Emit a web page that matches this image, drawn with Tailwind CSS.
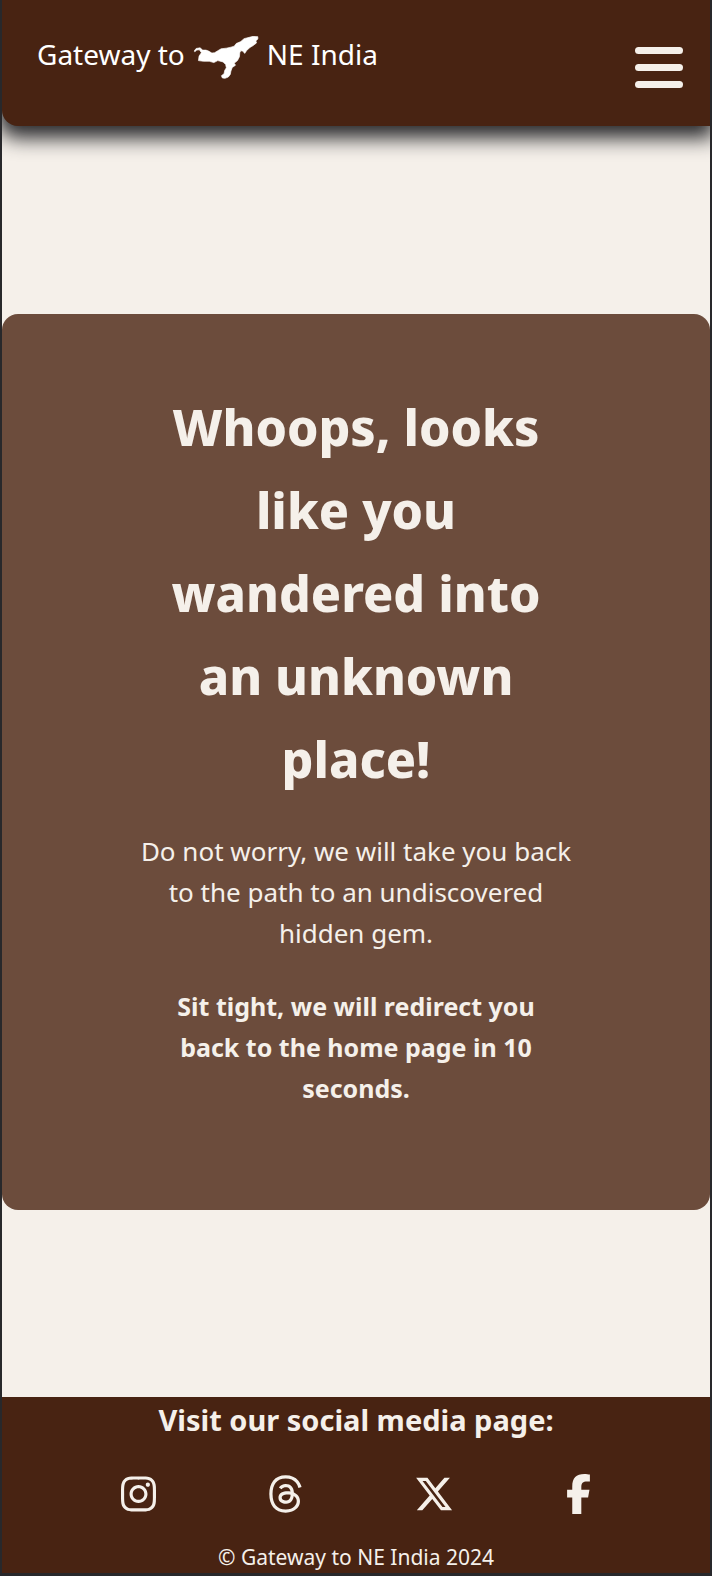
<!DOCTYPE html>
<html lang="en">
<head>
<meta charset="utf-8">
<meta name="viewport" content="width=device-width, initial-scale=1">
<title>Gateway to NE India</title>
<script src="https://cdn.jsdelivr.net/npm/@tailwindcss/browser@4"></script>
</head>
<body class="flex min-h-screen flex-col border-x-2 border-b-3 border-[#28282b] bg-[#f5f0ea] font-['Noto_Sans',sans-serif] text-[#f5f0ea]">
  <header class="flex items-start justify-between rounded-bl-2xl bg-[#482312] pt-9 pr-4 pb-[27px] pl-[35px] shadow-[0_8px_20px_4px_#28282b]">
    <a href="#" class="flex items-start gap-2 text-[28px] leading-[37px] text-white">
      <span>Gateway to</span>
      <svg class="h-[43px] w-[66px]" viewBox="9 9 200 131" fill="currentColor" stroke="currentColor" stroke-width="2" stroke-linejoin="round" aria-hidden="true"><path d="M12 55 L18 47 L30 45 L38 52 L48 52 L56 55 L66 61 L74 60 L84 54 L94 48 L110 46 L124 43 L134 40 L140 32 L154 26 L164 17 L180 13 L192 10 L206 11 L206 18 L200 24 L202 30 L192 38 L182 44 L172 53 L166 62 L160 55 L154 54 L151 60 L150 72 L144 84 L134 92 L138 98 L128 105 L124 116 L122 126 L116 134 L106 138 L98 137 L95 130 L103 124 L105 114 L110 106 L108 96 L100 88 L84 84 L72 90 L58 86 L40 86 L25 84 L27 70 L34 60 L28 51 L20 52 L14 57Z"/></svg>
      <span>NE India</span>
    </a>
    <button type="button" aria-label="Open menu" class="p-[11px]">
      <svg class="h-[41px] w-12" viewBox="0 0 48 41" fill="currentColor" aria-hidden="true"><rect width="48" height="7" rx="3.5"/><rect y="17" width="48" height="7" rx="3.5"/><rect y="34" width="48" height="7" rx="3.5"/></svg>
    </button>
  </header>

  <main class="flex grow flex-col justify-center pt-px">
    <section class="rounded-2xl bg-[#6c4c3c] px-[136px] pt-[72px] pb-[101px] text-center">
      <h1 class="text-[50px] leading-[83px] font-extrabold">Whoops, looks like you wandered into an unknown place!</h1>
      <p class="mt-[30px] text-[26px] leading-[41px]">Do not worry, we will take you back to the path to an undiscovered hidden gem.</p>
      <p class="mt-8 px-8 text-[25px] leading-[41px] font-bold">Sit tight, we will redirect you back to the home page in 10 seconds.</p>
    </section>
  </main>

  <footer class="bg-[#482312] text-center">
    <h2 class="text-[29px] leading-[46px] font-bold">Visit our social media page:</h2>
    <nav aria-label="Social media" class="flex justify-evenly px-2 pt-[31px] pb-[27px]">
      <a href="#" aria-label="Instagram"><svg class="h-10 w-[35px]" viewBox="0 0 448 512" fill="currentColor"><path d="M224.1 141c-63.6 0-114.9 51.3-114.9 114.9s51.3 114.9 114.9 114.9S339 319.5 339 255.9 287.7 141 224.1 141zm0 189.6c-41.1 0-74.7-33.5-74.7-74.7s33.5-74.7 74.7-74.7 74.7 33.5 74.7 74.7-33.6 74.7-74.7 74.7zm146.4-194.3c0 14.9-12 26.8-26.8 26.8-14.9 0-26.8-12-26.8-26.8s12-26.8 26.8-26.8 26.8 12 26.8 26.8zm76.1 27.2c-1.7-35.9-9.9-67.7-36.2-93.9-26.2-26.2-58-34.4-93.9-36.2-37-2.1-147.9-2.1-184.9 0-35.8 1.7-67.6 9.9-93.9 36.1s-34.4 58-36.2 93.9c-2.1 37-2.1 147.9 0 184.9 1.7 35.9 9.9 67.7 36.2 93.9s58 34.4 93.9 36.2c37 2.1 147.9 2.1 184.9 0 35.9-1.7 67.7-9.9 93.9-36.2 26.2-26.2 34.4-58 36.2-93.9 2.1-37 2.1-147.8 0-184.8zM398.8 388c-7.8 19.6-22.9 34.7-42.6 42.6-29.5 11.7-99.5 9-132.1 9s-102.7 2.6-132.1-9c-19.6-7.8-34.7-22.9-42.6-42.6-11.7-29.5-9-99.5-9-132.1s-2.6-102.7 9-132.1c7.8-19.6 22.9-34.7 42.6-42.6 29.5-11.7 99.5-9 132.1-9s102.7-2.6 132.1 9c19.6 7.8 34.7 22.9 42.6 42.6 11.7 29.5 9 99.5 9 132.1s2.7 102.7-9 132.1z"/></svg></a>
      <a href="#" aria-label="Threads"><svg class="h-10 w-[35px]" viewBox="0 0 448 512" fill="currentColor"><path d="M331.5 235.7c2.2 .9 4.2 1.9 6.3 2.8c29.2 14.1 50.6 35.2 61.8 61.4c15.7 36.5 17.2 95.8-30.3 143.2c-36.2 36.2-80.3 52.5-142.6 53h-.3c-70.2-.5-124.1-24.1-160.4-70.2c-32.3-41-48.9-98.1-49.5-169.6V256v-.2C17 184.3 33.6 127.2 65.9 86.2C102.2 40.1 156.2 16.5 226.4 16h.3c70.3 .5 124.9 24 162.3 69.9c18.4 22.7 32 50 40.6 81.7l-40.4 10.8c-7.1-25.8-17.8-47.8-32.2-65.4c-29.2-35.8-73-54.2-130.5-54.6c-57 .5-100.1 18.8-128.2 54.4C72.1 146.1 58.5 194.3 58 256c.5 61.7 14.1 109.9 40.3 143.3c28 35.6 71.2 53.9 128.2 54.4c51.4-.4 85.4-12.6 113.7-40.9c32.3-32.2 31.7-71.8 21.4-95.9c-6.1-14.2-17.1-26-31.9-34.9c-3.7 26.9-11.8 48.3-24.7 64.8c-17.1 21.8-41.4 33.6-72.7 35.3c-23.6 1.3-46.3-4.4-63.9-16c-20.8-13.8-33-34.8-34.3-59.3c-2.5-48.3 35.7-83 95.2-86.4c21.1-1.2 40.9-.3 59.2 2.8c-2.4-14.8-7.3-26.6-14.6-35.2c-10-11.7-25.6-17.7-46.2-17.8H227c-16.6 0-39 4.6-53.3 26.3l-34.4-23.6c19.2-29.1 50.3-45.1 87.8-45.1h.8c62.6 .4 99.9 39.5 103.7 107.7l-.2 .2zm-156 68.8c1.3 25.1 28.4 36.8 54.6 35.3c25.6-1.4 54.6-11.4 59.5-73.2c-13.2-2.9-27.8-4.4-43.4-4.4c-4.8 0-9.6 .1-14.4 .4c-42.9 2.4-57.2 23.2-56.2 41.8l-.1 .1z"/></svg></a>
      <a href="#" aria-label="X"><svg class="size-10" viewBox="0 0 512 512" fill="currentColor"><path d="M389.2 48h70.6L305.6 224.2 487 464H345L233.7 318.6 106.5 464H35.8L200.7 275.5 26.8 48H172.4L272.9 180.9 389.2 48zM364.4 421.8h39.1L151.1 88h-42L364.4 421.8z"/></svg></a>
      <a href="#" aria-label="Facebook"><svg class="h-10 w-[25px]" viewBox="0 0 320 512" fill="currentColor"><path d="M80 299.3V512H196V299.3h86.5l18-97.8H196V166.9c0-51.7 20.3-71.5 72.7-71.5c16.3 0 29.4 .4 37 1.2V7.9C291.4 4 256.4 0 236.2 0C129.3 0 80 50.5 80 159.4v42.1H14v97.8H80z"/></svg></a>
    </nav>
    <p class="text-[21px] leading-8">© Gateway to NE India 2024</p>
  </footer>
</body>
</html>
